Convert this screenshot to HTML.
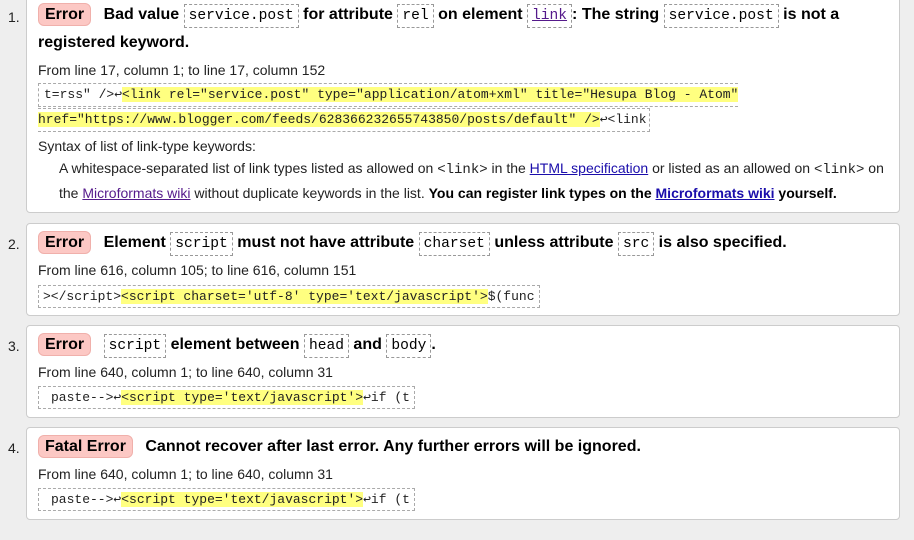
<!DOCTYPE html>
<html><head><meta charset="utf-8"><style>
body{margin:0;background:#eee;width:914px;height:540px;overflow:hidden;position:relative;font-family:"Liberation Sans",Arial,sans-serif;color:#000}
.card{position:absolute;left:26px;width:874px;background:#fff;border:1px solid #ccc;border-radius:4px;box-sizing:border-box}
.n{position:absolute;left:8px;font-size:14px;line-height:20px;color:#222}
.l{position:absolute;left:38px;white-space:nowrap}
.h{font-size:16px;font-weight:bold;line-height:28px}
.badge{display:inline-block;background:#fcc8c4;border:1px solid #f0b0ab;border-radius:6px;padding:0 6px;line-height:21px;margin-right:8px}
.c{font-family:"Liberation Mono",monospace;font-weight:normal;font-size:14.6px;border:1px dashed #999;padding:3px 4px}
.d{font-size:14px;line-height:22px;color:#222}
.code{font-family:"Liberation Mono",monospace;font-size:13px;line-height:22px;color:#222}
.cb{border:1px dashed #aaa;padding:0 4px;display:inline-block;line-height:21px}
.y{background:#ffff80}
a{color:#1a0dab;text-decoration:underline}
a.v{color:#551a8b}
.mono{font-family:"Liberation Mono",monospace}
</style></head><body>

<div class="card" style="top:-5px;height:218px"></div>
<div class="n" style="top:7px">1.</div>
<div class="l h" style="top:1px"><span class="badge">Error</span> Bad value <span class="c">service.post</span> for attribute <span class="c">rel</span> on element <span class="c"><a class="v">link</a></span>: The string <span class="c">service.post</span> is not a</div>
<div class="l h" style="top:29px">registered keyword.</div>
<div class="l d" style="top:59px">From line 17, column 1; to line 17, column 152</div>
<div class="l code" style="top:83px"><span style="border:1px dashed #aaa;border-right:none;padding-left:5px;display:inline-block;line-height:22px">t=rss" /&gt;↩<span class="y">&lt;link rel="service.post" type="application/atom+xml" title="Hesupa Blog - Atom"</span></span></div>
<div class="code" style="position:absolute;left:38px;top:108px;white-space:nowrap"><span style="border:1px dashed #aaa;border-left:none;padding-right:2px;display:inline-block;line-height:22px"><span class="y">href="https://www.blogger.com/feeds/628366232655743850/posts/default" /&gt;</span>↩&lt;link</span></div>
<div class="l d" style="top:135px">Syntax of list of link-type keywords:</div>
<div class="d" style="position:absolute;left:59px;top:157px;white-space:nowrap">A whitespace-separated list of link types listed as allowed on <span class="mono">&lt;link&gt;</span> in the <a>HTML specification</a> or listed as an allowed on <span class="mono">&lt;link&gt;</span> on</div>
<div class="d" style="position:absolute;left:59px;top:182px;white-space:nowrap">the <a class="v">Microformats wiki</a> without duplicate keywords in the list. <b style="color:#000">You can register link types on the <a>Microformats wiki</a> yourself.</b></div>

<div class="card" style="top:223px;height:93px"></div>
<div class="n" style="top:234px">2.</div>
<div class="l h" style="top:229px"><span class="badge">Error</span> Element <span class="c">script</span> must not have attribute <span class="c">charset</span> unless attribute <span class="c">src</span> is also specified.</div>
<div class="l d" style="top:259px">From line 616, column 105; to line 616, column 151</div>
<div class="l code" style="top:285px"><span class="cb">&gt;&lt;/script&gt;<span class="y">&lt;script charset='utf-8' type='text/javascript'&gt;</span>$(func</span></div>

<div class="card" style="top:325px;height:93px"></div>
<div class="n" style="top:336px">3.</div>
<div class="l h" style="top:331px"><span class="badge">Error</span> <span class="c">script</span> element between <span class="c">head</span> and <span class="c">body</span>.</div>
<div class="l d" style="top:361px">From line 640, column 1; to line 640, column 31</div>
<div class="l code" style="top:386px"><span class="cb" style="padding-left:12px">paste--&gt;↩<span class="y">&lt;script type='text/javascript'&gt;</span>↩if (t</span></div>

<div class="card" style="top:427px;height:93px"></div>
<div class="n" style="top:438px">4.</div>
<div class="l h" style="top:433px"><span class="badge">Fatal Error</span> Cannot recover after last error. Any further errors will be ignored.</div>
<div class="l d" style="top:463px">From line 640, column 1; to line 640, column 31</div>
<div class="l code" style="top:488px"><span class="cb" style="padding-left:12px">paste--&gt;↩<span class="y">&lt;script type='text/javascript'&gt;</span>↩if (t</span></div>

</body></html>
